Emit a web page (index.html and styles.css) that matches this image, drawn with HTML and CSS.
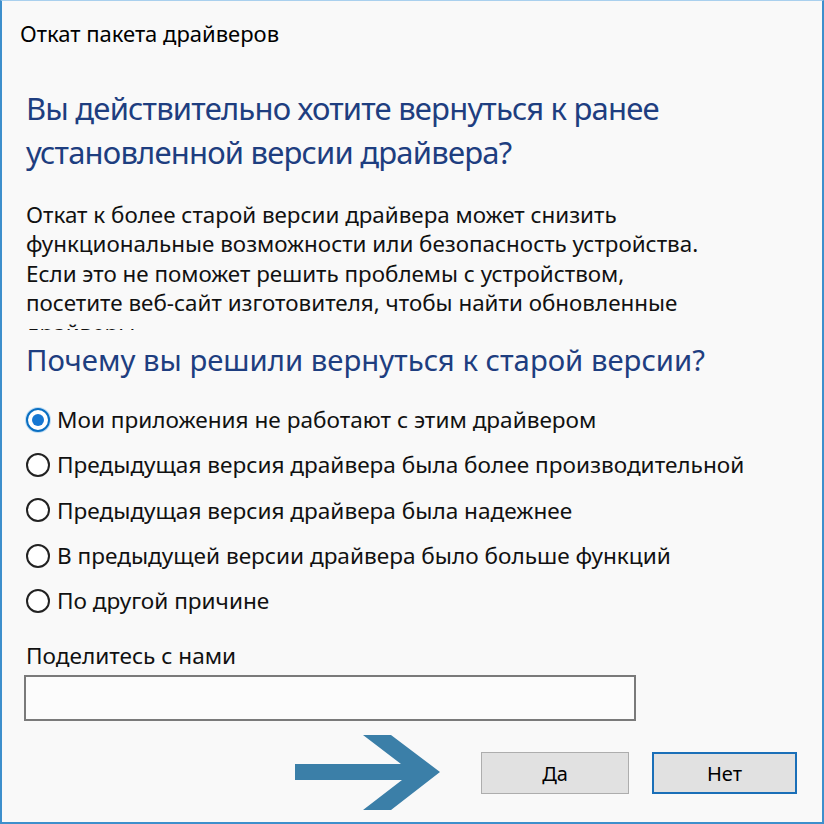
FILE: index.html
```html
<!DOCTYPE html>
<html>
<head>
    <title>Откат пакета драйверов</title>
    <link rel="stylesheet" href="styles.css">
</head>
<body>
    <div class="dialog">
        <div class="caption">Откат пакета драйверов</div>

        <div class="content">
            <h1 class="main-instruction">Вы действительно хотите вернуться к ранее установленной версии драйвера?</h1>

            <p class="desc">Откат к более старой версии драйвера может снизить функциональные возможности или безопасность устройства. Если это не поможет решить проблемы с устройством, посетите веб-сайт изготовителя, чтобы найти обновленные драйверы.</p>

            <h2 class="question">Почему вы решили вернуться к старой версии?</h2>

            <div class="options">
                <label class="option"><span class="radio checked"></span>Мои приложения не работают с этим драйвером</label>
                <label class="option"><span class="radio"></span>Предыдущая версия драйвера была более производительной</label>
                <label class="option"><span class="radio"></span>Предыдущая версия драйвера была надежнее</label>
                <label class="option"><span class="radio"></span>В предыдущей версии драйвера было больше функций</label>
                <label class="option"><span class="radio"></span>По другой причине</label>
            </div>

            <div class="share-label">Поделитесь с нами</div>
            <div class="share-input"></div>
        </div>

        <div class="footer">
            <!-- annotation arrow pointing at the Yes button -->
            <svg class="arrow" width="146" height="76" viewBox="0 0 146 76">
                <polygon points="0,29 106,29 68,0 96,0 145,37 96,75 68,75 107,45 0,45" fill="#3b7fa8"/>
            </svg>
            <div class="btn">Да</div>
            <div class="btn default">Нет</div>
        </div>
    </div>
</body>
</html>
```

FILE: styles.css
```css
html, body {
    margin: 0;
    padding: 0;
}
body {
    font-family: "Noto Sans", "Open Sans", sans-serif;
    color: #111;
    background: #fff;
}
.dialog {
    box-sizing: border-box;
    width: 824px;
    height: 824px;
    background: #f9f9f9;
    border: 2px solid #3d8fcc;
    border-top: 1px solid #a9d0ee;
    overflow: hidden;
}
.caption {
    padding: 19px 0 0 18px;
    font-size: 22px;
    line-height: 26px;
    color: #000;
}
.content {
    padding: 0 24px;
}
.main-instruction {
    margin: 40px 0 0;
    font-size: 31px;
    font-weight: 400;
    letter-spacing: -0.8px;
    line-height: 44px;
    color: #1e3e80;
}
.desc {
    margin: 26px 0 0;
    width: 700px;
    height: 130px;
    overflow: hidden;
    font-size: 22.4px;
    line-height: 29.4px;
    color: #111;
}
.question {
    margin: 10px 0 0;
    font-size: 29.3px;
    font-weight: 400;
    line-height: 40px;
    color: #1e3e80;
}
.options {
    margin-top: 17px;
    display: flex;
    flex-direction: column;
}
.option {
    display: flex;
    align-items: center;
    gap: 7px;
    height: 45.3px;
    font-size: 22.6px;
    color: #111;
}
.radio {
    box-sizing: border-box;
    width: 24px;
    height: 24px;
    border: 2px solid #222;
    border-radius: 50%;
    background: #fff;
    display: flex;
    align-items: center;
    justify-content: center;
    flex: none;
}
.radio.checked {
    border-color: #0a6fc2;
    box-shadow: 0 0 0 1px #bfdcf3;
}
.radio.checked::after {
    content: "";
    width: 12px;
    height: 12px;
    border-radius: 50%;
    background: #1677d2;
}
.share-label {
    margin-top: 19px;
    font-size: 22.6px;
    line-height: 28px;
}
.share-input {
    box-sizing: border-box;
    margin: 5px 0 0 -2px;
    width: 612px;
    height: 46px;
    border: 2px solid #7a7a7a;
    background: #fcfcfc;
}
.footer {
    display: flex;
    align-items: center;
    justify-content: flex-end;
    margin-top: 14px;
    padding-right: 25px;
}
.arrow {
    margin-right: 40px;
    flex: none;
}
.btn {
    box-sizing: border-box;
    width: 148px;
    height: 42px;
    display: flex;
    align-items: center;
    justify-content: center;
    background: #e1e1e1;
    border: 1px solid #adadad;
    font-size: 20px;
    color: #000;
}
.btn.default {
    margin-left: 23px;
    width: 145px;
    border: 2px solid #1a6fb8;
}
```
